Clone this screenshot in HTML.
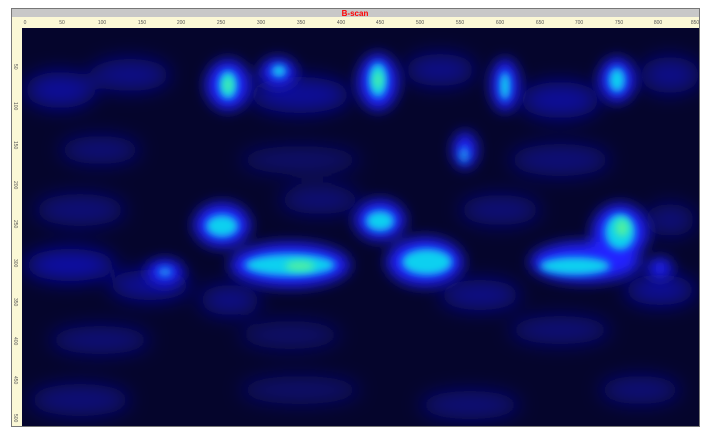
<!DOCTYPE html>
<html><head><style>
body{margin:0;width:715px;height:441px;background:#fff;overflow:hidden;font-family:"Liberation Sans",sans-serif}
</style></head><body>
<svg width="715" height="441" xmlns="http://www.w3.org/2000/svg" style="position:absolute;left:0;top:0">
<defs>
<filter id="b" filterUnits="userSpaceOnUse" x="0" y="0" width="715" height="441"><feGaussianBlur stdDeviation="10"/></filter>
<filter id="m" filterUnits="userSpaceOnUse" x="0" y="0" width="715" height="441"><feGaussianBlur stdDeviation="7"/></filter>
<filter id="s" filterUnits="userSpaceOnUse" x="0" y="0" width="715" height="441"><feGaussianBlur stdDeviation="4"/></filter>
<clipPath id="c"><rect x="22" y="28" width="677" height="398"/></clipPath>
</defs>
<rect x="11" y="8" width="689" height="419" fill="#777"/>
<rect x="12" y="9" width="687" height="8" fill="#c8c8c8"/>
<text x="355" y="16" font-size="8" fill="#f00" font-weight="bold" text-anchor="middle">B-scan</text>
<rect x="12" y="17" width="687" height="11" fill="#fbf8d6"/>
<rect x="12" y="17" width="10" height="409" fill="#fbf8d6"/>
<g font-size="5" fill="#555" text-anchor="middle">
<text x="25" y="24">0</text><text x="62" y="24">50</text><text x="102" y="24">100</text><text x="142" y="24">150</text><text x="181" y="24">200</text><text x="221" y="24">250</text><text x="261" y="24">300</text><text x="301" y="24">350</text><text x="341" y="24">400</text><text x="380" y="24">450</text><text x="420" y="24">500</text><text x="460" y="24">550</text><text x="500" y="24">600</text><text x="540" y="24">650</text><text x="579" y="24">700</text><text x="619" y="24">750</text><text x="658" y="24">800</text><text x="695" y="24">850</text>
</g>
<g font-size="5" fill="#555">
<text transform="translate(14,64) rotate(90)">50</text><text transform="translate(14,102) rotate(90)">100</text><text transform="translate(14,141) rotate(90)">150</text><text transform="translate(14,181) rotate(90)">200</text><text transform="translate(14,220) rotate(90)">250</text><text transform="translate(14,259) rotate(90)">300</text><text transform="translate(14,298) rotate(90)">350</text><text transform="translate(14,337) rotate(90)">400</text><text transform="translate(14,376) rotate(90)">450</text><text transform="translate(14,414) rotate(90)">500</text>
</g>
<g clip-path="url(#c)">
<rect x="22" y="28" width="677" height="398" fill="#05052c"/>
<g filter="url(#b)" fill="#1414c8">
<ellipse cx="60" cy="90" rx="35" ry="18" opacity="0.7"/>
<ellipse cx="130" cy="75" rx="40" ry="16" opacity="0.6"/>
<ellipse cx="300" cy="95" rx="50" ry="18" opacity="0.7"/>
<ellipse cx="440" cy="70" rx="35" ry="16" opacity="0.6"/>
<ellipse cx="560" cy="100" rx="40" ry="18" opacity="0.7"/>
<ellipse cx="670" cy="75" rx="30" ry="18" opacity="0.6"/>
<ellipse cx="100" cy="150" rx="40" ry="14" opacity="0.5"/>
<ellipse cx="300" cy="160" rx="60" ry="14" opacity="0.4"/>
<ellipse cx="560" cy="160" rx="50" ry="16" opacity="0.5"/>
<ellipse cx="80" cy="210" rx="45" ry="16" opacity="0.5"/>
<ellipse cx="320" cy="200" rx="40" ry="14" opacity="0.5"/>
<ellipse cx="500" cy="210" rx="40" ry="15" opacity="0.5"/>
<ellipse cx="670" cy="220" rx="25" ry="16" opacity="0.5"/>
<ellipse cx="70" cy="265" rx="45" ry="16" opacity="0.8"/>
<ellipse cx="150" cy="285" rx="40" ry="15" opacity="0.7"/>
<ellipse cx="230" cy="300" rx="30" ry="15" opacity="0.6"/>
<ellipse cx="480" cy="295" rx="40" ry="15" opacity="0.6"/>
<ellipse cx="660" cy="290" rx="35" ry="15" opacity="0.7"/>
<ellipse cx="100" cy="340" rx="50" ry="14" opacity="0.5"/>
<ellipse cx="290" cy="335" rx="50" ry="14" opacity="0.4"/>
<ellipse cx="560" cy="330" rx="50" ry="14" opacity="0.5"/>
<ellipse cx="80" cy="400" rx="50" ry="16" opacity="0.5"/>
<ellipse cx="300" cy="390" rx="60" ry="14" opacity="0.4"/>
<ellipse cx="470" cy="405" rx="50" ry="14" opacity="0.5"/>
<ellipse cx="640" cy="390" rx="40" ry="14" opacity="0.5"/>
</g>
<g filter="url(#m)" fill="#2020ff">
<ellipse cx="228" cy="85" rx="22" ry="25"/>
<ellipse cx="278" cy="72" rx="18" ry="14"/>
<ellipse cx="378" cy="82" rx="20" ry="28"/>
<ellipse cx="505" cy="85" rx="14" ry="26"/>
<ellipse cx="617" cy="80" rx="18" ry="22"/>
<ellipse cx="222" cy="225" rx="28" ry="22"/>
<ellipse cx="380" cy="220" rx="25" ry="20"/>
<ellipse cx="290" cy="265" rx="60" ry="22"/>
<ellipse cx="425" cy="262" rx="38" ry="24"/>
<ellipse cx="585" cy="262" rx="55" ry="20"/>
<ellipse cx="620" cy="232" rx="28" ry="28"/>
<ellipse cx="465" cy="150" rx="12" ry="18"/>
<ellipse cx="165" cy="272" rx="18" ry="12"/>
<ellipse cx="660" cy="268" rx="12" ry="10"/>
</g>
<g filter="url(#s)" fill="#10d0f0">
<ellipse cx="228" cy="85" rx="9" ry="14"/>
<ellipse cx="279" cy="71" rx="7" ry="6"/>
<ellipse cx="378" cy="80" rx="9" ry="17"/>
<ellipse cx="505" cy="86" rx="5" ry="14"/>
<ellipse cx="617" cy="80" rx="8" ry="12"/>
<ellipse cx="222" cy="226" rx="16" ry="11"/>
<ellipse cx="380" cy="221" rx="14" ry="10"/>
<ellipse cx="290" cy="265" rx="45" ry="11"/>
<ellipse cx="427" cy="262" rx="25" ry="13"/>
<ellipse cx="575" cy="266" rx="35" ry="9"/>
<ellipse cx="620" cy="232" rx="15" ry="18"/>
<ellipse cx="464" cy="155" rx="5" ry="8" opacity="0.6"/>
<ellipse cx="165" cy="272" rx="7" ry="5" opacity="0.6"/>
</g>
<g filter="url(#s)" fill="#50f0a0">
<ellipse cx="228" cy="85" rx="4" ry="8"/>
<ellipse cx="378" cy="80" rx="4" ry="9"/>
<ellipse cx="300" cy="266" rx="15" ry="5"/>
<ellipse cx="622" cy="228" rx="7" ry="9"/>
</g>
</g>
</svg>
</body></html>
